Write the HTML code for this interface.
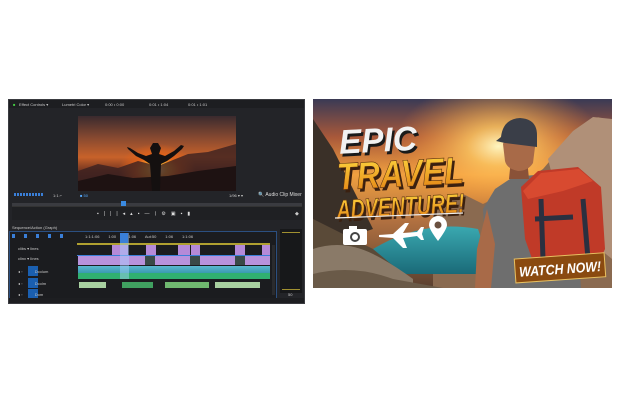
<!DOCTYPE html>
<html><head><meta charset="utf-8"><style>
*{margin:0;padding:0;box-sizing:border-box}
body{width:618px;height:412px;background:#fff;position:relative;overflow:hidden;font-family:"Liberation Sans",sans-serif}
.a{position:absolute}
.t{position:absolute;color:#c8c8c8;font-size:4px;white-space:nowrap}
</style></head><body>
<!-- LEFT EDITOR -->
<div class="a" style="left:8px;top:99px;width:297px;height:205px;background:#232428;border:1px solid #3a3b40"></div>
<div class="a" style="left:9px;top:100px;width:295px;height:8px;background:#1d1e21"></div>
<div class="t" style="left:13px;top:102px;color:#4c4">■</div>
<div class="t" style="left:19px;top:102px">Effect Controls ▾</div>
<div class="t" style="left:62px;top:102px">Lumetri Color ▾</div>
<div class="t" style="left:105px;top:102px">0:00 • 0:00</div>
<div class="t" style="left:149px;top:102px">0:01 • 1:04</div>
<div class="t" style="left:188px;top:102px">0:01 • 1:01</div>
<div class="a" style="left:78px;top:116px;width:158px;height:75px;background:radial-gradient(ellipse 35% 50% at 50% 72%,#fff2b0 0%,#ffb030 18%,#e0621a 40%,transparent 70%),linear-gradient(#3a2a2e 0%,#8a4a30 30%,#c8622a 55%,#6a3020 75%,#2a1a18 100%)"></div>
<svg class="a" style="left:78px;top:116px" width="158" height="75" viewBox="0 0 158 75">
<path d="M0 55 L20 48 L40 52 L60 45 L80 50 L110 38 L130 36 L158 28 L158 75 L0 75Z" fill="#3a2020" opacity=".8"/>
<path d="M0 65 L30 58 L55 62 L90 60 L120 55 L158 50 L158 75 L0 75Z" fill="#1e1212"/>
<path d="M74 75 L72 48 L66 44 L58 40 L50 33 L49 31 L52 32 L60 37 L68 40 L74 38 L72 32 L75 27 L80 27 L83 32 L81 38 L87 40 L96 35 L103 29 L106 30 L104 33 L96 40 L89 45 L83 48 L82 75Z" fill="#141010"/>
</svg>
<div class="a" style="left:14px;top:193px;width:30px;height:3px;background:repeating-linear-gradient(90deg,#3a7fd8 0 2px,transparent 2px 3px)"></div>
<div class="t" style="left:53px;top:193px">1:1 ⌐</div>
<div class="t" style="left:80px;top:193px;color:#5af">■ 50</div>
<div class="t" style="left:229px;top:193px">1/96 ▾ ▾</div>
<div class="t" style="left:258px;top:192px;font-size:5px;color:#ddd">🔍 Audio Clip Mixer</div>
<div class="a" style="left:12px;top:203px;width:290px;height:3px;background:#3a3b40"></div>
<div class="a" style="left:121px;top:201px;width:5px;height:6px;background:#3a8ae0"></div>
<div class="a" style="left:12px;top:206px;width:290px;height:14px;background:#1f2023;border-top:1px solid #333"></div>
<div class="t" style="left:97px;top:211px;font-size:5px;letter-spacing:5px;color:#ddd">▪|||◂▴▪—⟨⚙▣▪▮</div>
<div class="t" style="left:295px;top:211px;font-size:5px">◆</div>
<!-- timeline -->
<div class="a" style="left:9px;top:231px;width:268px;height:70px;background:#1b1c1f;border:1px solid #2b4f80"></div>
<div class="t" style="left:12px;top:225px">Sequence/Action (Graph)</div>
<div class="a" style="left:12px;top:234px;width:60px;height:4px;background:repeating-linear-gradient(90deg,#3a7fd8 0 3px,transparent 3px 12px)"></div>
<div class="t" style="left:18px;top:246px">clibs ▾ lines</div>
<div class="t" style="left:18px;top:256px">clinx ▾ Iines</div>
<div class="a" style="left:28px;top:266px;width:10px;height:10px;background:#1a5fb0"></div>
<div class="a" style="left:28px;top:278px;width:10px;height:10px;background:#1a5fb0"></div>
<div class="a" style="left:28px;top:289px;width:10px;height:10px;background:#1a5fb0"></div>
<div class="t" style="left:18px;top:269px">◂ ◦ &nbsp;&nbsp;&nbsp;&nbsp;&nbsp;&nbsp;&nbsp;&nbsp;&nbsp; Dcolum</div>
<div class="t" style="left:18px;top:281px">◂ ◦ &nbsp;&nbsp;&nbsp;&nbsp;&nbsp;&nbsp;&nbsp;&nbsp;&nbsp; Dcolm</div>
<div class="t" style="left:18px;top:292px">◂ ◦ &nbsp;&nbsp;&nbsp;&nbsp;&nbsp;&nbsp;&nbsp;&nbsp;&nbsp; Dom</div>
<div class="t" style="left:85px;top:234px">1:1:1:06 &nbsp;&nbsp;&nbsp;&nbsp;&nbsp;&nbsp; 1:00 &nbsp;&nbsp;&nbsp;&nbsp;&nbsp;&nbsp; 1:1:06 &nbsp;&nbsp;&nbsp;&nbsp;&nbsp;&nbsp; Aut:50 &nbsp;&nbsp;&nbsp;&nbsp;&nbsp;&nbsp; 1:06 &nbsp;&nbsp;&nbsp;&nbsp;&nbsp;&nbsp; 1:1:06</div>
<div class="a" style="left:77px;top:243px;width:193px;height:2px;background:#b0a030"></div>
<div class="a" style="left:112px;top:245px;width:16px;height:10px;background:#b58ad8"></div>
<div class="a" style="left:146px;top:245px;width:10px;height:10px;background:#b58ad8"></div>
<div class="a" style="left:178px;top:245px;width:12px;height:10px;background:#b58ad8"></div>
<div class="a" style="left:191px;top:245px;width:9px;height:10px;background:#b58ad8"></div>
<div class="a" style="left:235px;top:245px;width:10px;height:10px;background:#b58ad8"></div>
<div class="a" style="left:262px;top:245px;width:8px;height:10px;background:#b58ad8"></div>
<div class="a" style="left:77px;top:255px;width:193px;height:1px;background:#3a7fd8"></div>
<div class="a" style="left:78px;top:256px;width:192px;height:9px;background:#b892dc"></div>
<div class="a" style="left:145px;top:256px;width:10px;height:9px;background:#3a4a48"></div>
<div class="a" style="left:190px;top:256px;width:10px;height:9px;background:#3a4a48"></div>
<div class="a" style="left:235px;top:256px;width:10px;height:9px;background:#3a4a48"></div>
<div class="a" style="left:78px;top:266px;width:192px;height:7px;background:linear-gradient(#5ab8d0,#3a9ab0)"></div>
<div class="a" style="left:78px;top:273px;width:192px;height:6px;background:#30b070"></div>
<div class="a" style="left:79px;top:282px;width:27px;height:6px;background:#a8d0a0"></div>
<div class="a" style="left:122px;top:282px;width:31px;height:6px;background:#40a060"></div>
<div class="a" style="left:165px;top:282px;width:44px;height:6px;background:#70b870"></div>
<div class="a" style="left:215px;top:282px;width:45px;height:6px;background:#a8d0a0"></div>
<div class="a" style="left:120px;top:233px;width:9px;height:46px;background:rgba(170,210,255,.45)"></div>
<div class="a" style="left:120px;top:233px;width:8px;height:10px;background:#3a7fd8"></div>
<div class="a" style="left:272px;top:245px;width:3px;height:50px;background:#2a2b2e"></div>
<div class="a" style="left:280px;top:229px;width:22px;height:64px;background:#17181a"></div>
<div class="a" style="left:282px;top:232px;width:18px;height:1px;background:#a09030"></div>
<div class="a" style="left:282px;top:289px;width:18px;height:1px;background:#a09030"></div>
<div class="t" style="left:288px;top:292px">50</div>
<div class="a" style="left:9px;top:298px;width:295px;height:5px;background:#1d1e21"></div>
<!-- RIGHT THUMBNAIL -->
<svg class="a" style="left:313px;top:99px" width="299" height="189" viewBox="0 0 299 189">
<defs>
<linearGradient id="sky" x1="0" y1="0" x2="0" y2="1"><stop offset="0" stop-color="#3a3a55"/><stop offset=".2" stop-color="#a8583a"/><stop offset=".4" stop-color="#f0a040"/><stop offset=".65" stop-color="#b07040"/><stop offset="1" stop-color="#5a4030"/></linearGradient>
<radialGradient id="sun" cx=".62" cy=".25" r=".35"><stop offset="0" stop-color="#fff5c0"/><stop offset=".3" stop-color="#ffc860" stop-opacity=".8"/><stop offset="1" stop-color="#ff9030" stop-opacity="0"/></radialGradient>
<linearGradient id="gold" x1="0" y1="0" x2="0" y2="1"><stop offset="0" stop-color="#ffd840"/><stop offset="1" stop-color="#e07a10"/></linearGradient>
<linearGradient id="lake" x1="0" y1="0" x2="0" y2="1"><stop offset="0" stop-color="#3aa8b0"/><stop offset="1" stop-color="#1a6a78"/></linearGradient>
</defs>
<rect width="299" height="189" fill="url(#sky)"/>
<rect width="299" height="189" fill="url(#sun)"/>
<path d="M120 110 L150 95 L170 105 L200 90 L230 70 L260 35 L285 18 L299 22 L299 189 L120 189Z" fill="#8a6a50"/>
<path d="M235 60 L260 32 L280 18 L299 20 L299 160 L250 120Z" fill="#b09078"/>
<path d="M0 20 L20 50 L40 90 L60 130 L0 150Z" fill="#3a3028"/>
<path d="M60 150 Q110 120 165 130 L180 175 L70 175Z" fill="url(#lake)"/>
<path d="M0 120 L40 140 L60 150 L90 175 L0 189Z" fill="#5a4a38"/>
<path d="M0 150 Q30 140 60 155 Q80 165 100 180 L100 189 L0 189Z" fill="#8a7a68"/>
<path d="M0 175 Q40 165 80 180 L130 189 L0 189Z" fill="#6a5a48"/>
<!-- man -->
<path d="M178 189 L172 145 L170 110 L182 90 L200 78 L222 76 L245 82 L262 100 L268 189Z" fill="#6e6e6e"/>
<path d="M174 110 L164 150 L162 189 L178 189 L182 145Z" fill="#a86a48"/>
<path d="M196 80 L198 60 L214 60 L216 80Z" fill="#8a5238"/>
<path d="M190 45 Q192 36 205 35 Q220 36 222 48 L220 64 Q215 72 205 72 Q194 70 192 62Z" fill="#a86a48"/>
<path d="M188 38 Q190 20 207 19 Q224 20 224 36 L224 48 L192 44 L183 42Z" fill="#3a3e48"/>
<path d="M208 88 L225 72 L265 68 L288 88 L292 150 L285 165 L222 168 L212 140Z" fill="#c03a28"/>
<path d="M210 92 L228 74 L266 70 L280 82 L250 92 L215 100Z" fill="#d84a30"/>
<path d="M222 120 L260 118 M228 100 L230 160 M270 100 L275 160" stroke="#2a3040" stroke-width="5" fill="none"/>
<!-- text -->
<g font-family="Liberation Sans,sans-serif" font-weight="bold" font-style="italic" transform="rotate(-3 80 80)">
<text x="28" y="52" font-size="34" textLength="78" lengthAdjust="spacingAndGlyphs" fill="#1a1a1a" transform="translate(2 3)">EPIC</text>
<text x="28" y="52" font-size="34" textLength="78" lengthAdjust="spacingAndGlyphs" fill="#f2f2f2">EPIC</text>
<text x="24" y="88" font-size="38" textLength="127" lengthAdjust="spacingAndGlyphs" fill="#3a2010" transform="translate(2 3)">TRAVEL</text>
<text x="24" y="88" font-size="38" textLength="127" lengthAdjust="spacingAndGlyphs" fill="url(#gold)" stroke="#5a3010" stroke-width=".6">TRAVEL</text>
<text x="22" y="117" font-size="27" textLength="128" lengthAdjust="spacingAndGlyphs" fill="#3a2010" transform="translate(2 3)">ADVENTURE!</text>
<text x="22" y="117" font-size="27" textLength="128" lengthAdjust="spacingAndGlyphs" fill="url(#gold)" stroke="#5a3010" stroke-width=".6">ADVENTURE!</text>
</g>
<path d="M22 119 L150 114" stroke="#eee" stroke-width="1.2"/>
<rect x="30" y="130" width="24" height="16" rx="2" fill="#fff"/><rect x="36" y="127" width="8" height="4" fill="#fff"/><circle cx="42" cy="138" r="5" fill="#444"/><circle cx="42" cy="138" r="3" fill="#fff"/>
<path d="M66 136 L80 135 L92 124 L96 124 L90 134 L104 133 L108 128 L111 128 L109 135 L111 141 L108 141 L104 137 L90 139 L94 149 L90 149 L80 139 L66 138Z" fill="#fff"/>
<path d="M125 142 Q116 130 116 126 A9 9 0 0 1 134 126 Q134 130 125 142Z" fill="#fff"/><circle cx="125" cy="126" r="3.5" fill="#6a5040"/>
<g transform="rotate(-4 245 169)"><rect x="202" y="157" width="90" height="24" fill="#8a4a10" stroke="#e8c060" stroke-width="1"/>
<text x="247" y="175" text-anchor="middle" font-family="Liberation Sans,sans-serif" font-weight="bold" font-style="italic" font-size="14" textLength="82" lengthAdjust="spacingAndGlyphs" fill="#fff">WATCH NOW!</text></g>
</svg>
</body></html>
